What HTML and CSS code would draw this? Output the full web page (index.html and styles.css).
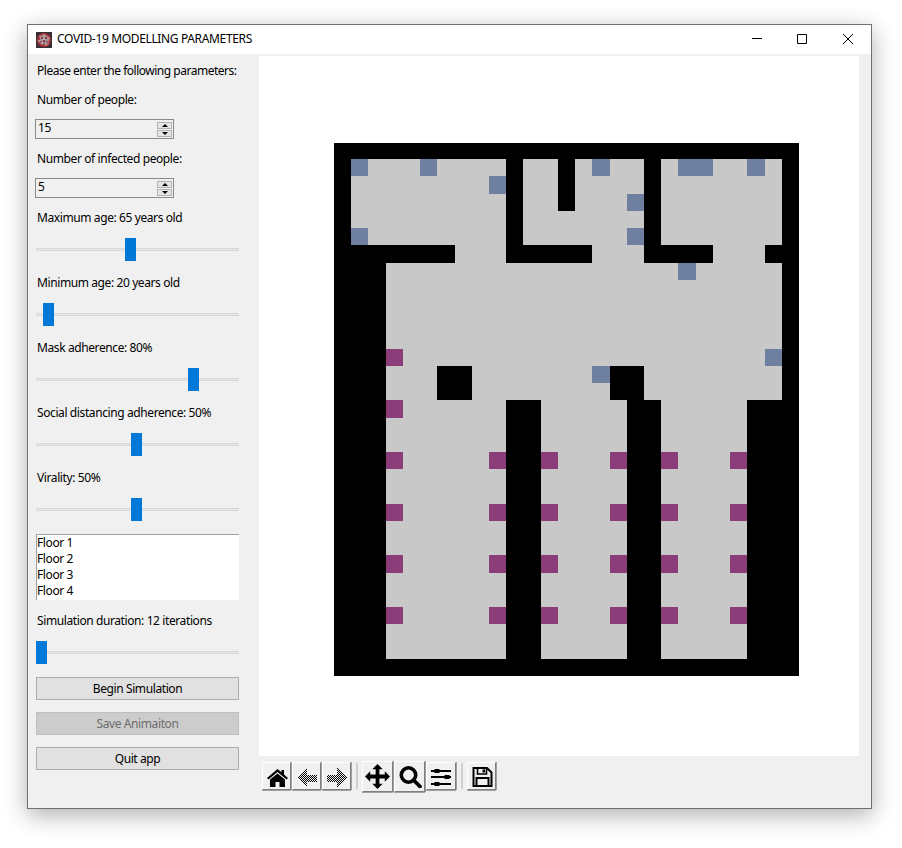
FILE: index.html
```html
<!DOCTYPE html>
<html lang="en">
<head>
<meta charset="utf-8">
<title>COVID-19 MODELLING PARAMETERS</title>
<link rel="stylesheet" href="styles.css">
</head>
<body>
<div class="window">
  <header class="titlebar">
    <svg class="app-icon" width="16" height="16" viewBox="0 0 16 16">
      <rect width="16" height="16" fill="#3a3032"/>
      <circle cx="8" cy="8" r="7" fill="#a8323a"/>
      <circle cx="8" cy="8" r="5" fill="#a89496"/>
      <g fill="#7e1f28"><circle cx="6" cy="6" r="1"/><circle cx="10" cy="6" r="1"/><circle cx="8" cy="9" r="1"/><circle cx="5" cy="10" r=".8"/><circle cx="11" cy="10" r=".8"/><circle cx="8" cy="12" r=".8"/><circle cx="3.500" cy="7" r=".7"/></g>
      <g fill="#eadede"><circle cx="8" cy="3" r=".7"/><circle cx="8" cy="7" r=".7"/><circle cx="3" cy="9" r=".7"/><circle cx="13" cy="6" r=".7"/><circle cx="10" cy="13" r=".7"/><circle cx="4" cy="4" r=".6"/><circle cx="12" cy="12" r=".6"/><circle cx="6" cy="11" r=".6"/></g>
    </svg>
    <span class="title">COVID-19 MODELLING PARAMETERS</span>
    <div class="controls">
      <svg class="ctl" width="10" height="10" viewBox="0 0 10 10"><path d="M0 4.500h10" stroke="#000" fill="none"/></svg>
      <svg class="ctl" width="10" height="10" viewBox="0 0 10 10"><path d="M.5.5h9v9h-9z" stroke="#000" fill="none"/></svg>
      <svg class="ctl ctl-close" width="10" height="10" viewBox="0 0 10 10"><path d="M0 0l10 10M10 0L0 10" stroke="#000" fill="none"/></svg>
    </div>
  </header>
  <div class="client">
    <aside class="sidebar">
      <div class="label l-first">Please enter the following parameters:</div>
      <div class="label l-after-label">Number of people:</div>
      <div class="spin s-first"><span>15</span><div class="spin-btns"><i class="up"></i><i class="down"></i></div></div>
      <div class="label l-after-spin">Number of infected people:</div>
      <div class="spin"><span>5</span><div class="spin-btns"><i class="up"></i><i class="down"></i></div></div>
      <div class="label l-after-spin">Maximum age: 65 years old</div>
      <div class="slider"><div class="thumb" style="margin-left:89px"></div></div>
      <div class="label l-after-slider">Minimum age: 20 years old</div>
      <div class="slider"><div class="thumb" style="margin-left:7px"></div></div>
      <div class="label l-after-slider">Mask adherence: 80%</div>
      <div class="slider"><div class="thumb" style="margin-left:152px"></div></div>
      <div class="label l-after-slider">Social distancing adherence: 50%</div>
      <div class="slider"><div class="thumb" style="margin-left:95px"></div></div>
      <div class="label l-after-slider">Virality: 50%</div>
      <div class="slider"><div class="thumb" style="margin-left:95px"></div></div>
      <ul class="list">
        <li>Floor 1</li>
        <li>Floor 2</li>
        <li>Floor 3</li>
        <li>Floor 4</li>
      </ul>
      <div class="label l-after-list">Simulation duration: 12 iterations</div>
      <div class="slider"><div class="thumb" style="margin-left:0"></div></div>
      <button class="btn">Begin Simulation</button>
      <button class="btn btn-off">Save Animaiton</button>
      <button class="btn">Quit app</button>
    </aside>
    <main class="main">
      <div class="canvas">
        <svg class="map" width="465" height="534" viewBox="0 0 465 534" shape-rendering="crispEdges">
          <rect y="1" width="465" height="533" fill="#000"/>
          <g fill="#c8c8c8">
            <rect x="17" y="17" width="155" height="86"/>
            <rect x="121" y="103" width="51" height="18"/>
            <rect x="189" y="17" width="121" height="86"/>
            <rect x="258" y="103" width="52" height="18"/>
            <rect x="327" y="17" width="121" height="86"/>
            <rect x="379" y="103" width="52" height="18"/>
            <rect x="52" y="121" width="396" height="137"/>
            <rect x="52" y="258" width="120" height="259"/>
            <rect x="207" y="258" width="86" height="259"/>
            <rect x="327" y="258" width="86" height="259"/>
          </g>
          <g fill="#000">
            <rect x="224" y="17" width="17" height="52"/>
            <rect x="103" y="224" width="35" height="34"/>
            <rect x="276" y="224" width="34" height="34"/>
          </g>
          <g fill="#6f7fa0">
            <rect x="17" y="17" width="17" height="17"/>
            <rect x="86" y="17" width="17" height="17"/>
            <rect x="258" y="17" width="18" height="17"/>
            <rect x="344" y="17" width="35" height="17"/>
            <rect x="413" y="17" width="18" height="17"/>
            <rect x="155" y="34" width="17" height="18"/>
            <rect x="293" y="52" width="17" height="17"/>
            <rect x="17" y="86" width="17" height="17"/>
            <rect x="293" y="86" width="17" height="17"/>
            <rect x="344" y="121" width="18" height="17"/>
            <rect x="431" y="207" width="17" height="17"/>
            <rect x="258" y="224" width="18" height="17"/>
          </g>
          <g fill="#8b3d7a">
            <rect x="52" y="207" width="17" height="17"/>
            <rect x="52" y="258" width="17" height="18"/>
            <rect x="52" y="310" width="17" height="17"/><rect x="155" y="310" width="17" height="17"/><rect x="207" y="310" width="17" height="17"/><rect x="276" y="310" width="17" height="17"/><rect x="327" y="310" width="17" height="17"/><rect x="396" y="310" width="17" height="17"/>
            <rect x="52" y="362" width="17" height="17"/><rect x="155" y="362" width="17" height="17"/><rect x="207" y="362" width="17" height="17"/><rect x="276" y="362" width="17" height="17"/><rect x="327" y="362" width="17" height="17"/><rect x="396" y="362" width="17" height="17"/>
            <rect x="52" y="413" width="17" height="18"/><rect x="155" y="413" width="17" height="18"/><rect x="207" y="413" width="17" height="18"/><rect x="276" y="413" width="17" height="18"/><rect x="327" y="413" width="17" height="18"/><rect x="396" y="413" width="17" height="18"/>
            <rect x="52" y="465" width="17" height="17"/><rect x="155" y="465" width="17" height="17"/><rect x="207" y="465" width="17" height="17"/><rect x="276" y="465" width="17" height="17"/><rect x="327" y="465" width="17" height="17"/><rect x="396" y="465" width="17" height="17"/>
          </g>
        </svg>
      </div>
      <div class="toolbar">
        <div class="tool">
          <svg width="24" height="24" viewBox="0 0 24 24"><path d="M12.500 5L2 14l1.500 1.500 9-7.500 9 7.500L23 14l-4-3.500V6h-2.500v2.200z"/><path d="M12.500 9.500L5 15.500V23h5.500v-5h4v5H20v-7.500z"/></svg>
        </div>
        <div class="tool">
          <svg width="24" height="24" viewBox="0 0 24 24"><defs><pattern id="st" width="2" height="2" patternUnits="userSpaceOnUse"><rect width="1" height="1"/><rect x="1" y="1" width="1" height="1"/></pattern></defs><path fill="url(#st)" d="M2 14L12 4v6.500h10v7H12V24z" shape-rendering="crispEdges"/></svg>
        </div>
        <div class="tool">
          <svg width="24" height="24" viewBox="0 0 24 24"><path fill="url(#st)" d="M22 14L12 4v6.500H2v7h10V24z" shape-rendering="crispEdges"/></svg>
        </div>
        <div class="sep"></div>
        <div class="tool tool-up">
          <svg width="25" height="25" viewBox="0 0 24 24"><path d="M12 0l5 5h-3.200v5.200H19V7l5 5-5 5v-3.200h-5.200V19H17l-5 5-5-5h3.200v-5.200H5V17l-5-5 5-5v3.200h5.200V5H7z"/></svg>
        </div>
        <div class="tool tool-up">
          <svg width="24" height="24" viewBox="0 0 24 24"><circle cx="10.500" cy="11" r="7.200" fill="none" stroke="#000" stroke-width="3.600"/><path d="M15.500 16l6.500 6.500" stroke="#000" stroke-width="3.800" stroke-linecap="round"/></svg>
        </div>
        <div class="tool tool-mid">
          <svg width="24" height="24" viewBox="0 0 24 24"><path d="M2 7h20M2 13h20M2 20h20" stroke="#000" stroke-width="1.800" fill="none"/><rect x="5.500" y="5" width="5" height="4"/><rect x="15.500" y="11" width="5" height="4"/><rect x="5.500" y="18" width="5" height="4"/></svg>
        </div>
        <div class="sep"></div>
        <div class="tool">
          <svg width="24" height="24" viewBox="0 0 24 24"><path d="M3.500 4H17l4.500 4.500V22h-18z" fill="none" stroke="#000" stroke-width="2"/><path d="M7.500 4v6h9V4" stroke="#000" stroke-width="1.600" fill="none"/><rect x="12.500" y="5.500" width="2.500" height="3"/><path d="M6.500 22v-8h12v8" fill="none" stroke="#000" stroke-width="2"/></svg>
        </div>
      </div>
    </main>
  </div>
</div>
</body>
</html>
```

FILE: styles.css
```css
* { box-sizing: border-box; }
html, body { margin: 0; height: 100%; background: #fff; overflow: hidden; }
body {
  padding: 24px 0 0 27px;
  font-family: "Noto Sans", "Open Sans", sans-serif;
  font-size: 12px;
  color: #000;
}
.window {
  width: 845px;
  height: 785px;
  border: 1px solid #707070;
  background: #f0f0f0;
  display: flex;
  flex-direction: column;
  box-shadow: 0 6px 22px rgba(0, 0, 0, .32);
}
.titlebar {
  height: 29px;
  flex: none;
  background: #fff;
  display: flex;
  align-items: center;
  padding-left: 8px;
}
.app-icon { flex: none; }
.title { margin-left: 5px; margin-top: -2px; letter-spacing: -.35px; }
.controls { margin-left: auto; display: flex; align-items: center; padding-right: 18px; gap: 35px; margin-top: -1px; }
.ctl { display: block; }
.ctl-close { margin-left: 1px; }
.client { flex: 1; display: flex; min-height: 0; }
.sidebar {
  width: 231px;
  flex: none;
  display: flex;
  flex-direction: column;
  padding-left: 8px;
}
.label { height: 16px; line-height: 16px; padding-left: 1px; white-space: nowrap; letter-spacing: -.4px; }
.l-first { margin-top: 9px; letter-spacing: -.49px; }
.l-after-label { margin-top: 13px; }
.l-after-spin { margin-top: 12px; }
.l-after-slider { margin-top: 14px; }
.l-after-list { margin-top: 13px; }
.spin {
  width: 139px;
  height: 20px;
  margin-top: 11px;
  margin-left: -1px;
  border: 1px solid #8a8a8a;
  background: #f0f0f0;
  display: flex;
  align-items: center;
  justify-content: space-between;
  padding: 0 0 0 2px;
  line-height: 18px;
}
.spin span { margin-top: -2px; letter-spacing: -.3px; }
.spin-btns { width: 16px; display: flex; flex-direction: column; gap: 1px; padding-right: 1px; }
.spin-btns i {
  display: flex;
  align-items: center;
  justify-content: center;
  height: 7px;
  background: #e4e4e4;
  border: 1px solid #b4b4b4;
}
.spin-btns i::before { content: ""; width: 0; height: 0; border-left: 3px solid transparent; border-right: 3px solid transparent; }
.spin-btns .up::before { border-bottom: 3px solid #000; }
.spin-btns .down::before { border-top: 3px solid #000; }
.slider {
  width: 203px;
  height: 23px;
  margin-top: 12px;
  background: linear-gradient(#d8d8d8, #d8d8d8) 0 10px / 100% 1px no-repeat,
              linear-gradient(#e7e7e7, #e7e7e7) 0 11px / 100% 1px no-repeat,
              linear-gradient(#d8d8d8, #d8d8d8) 0 12px / 100% 1px no-repeat;
}
.thumb { width: 11px; height: 23px; background: #0078d7; }
.list {
  list-style: none;
  margin: 13px 0 0;
  padding: 0;
  width: 203px;
  height: 66px;
  background: #fff;
  border-top: 1px solid #a0a0a0;
  border-left: 1px solid #a0a0a0;
}
.list li { height: 16px; line-height: 16px; letter-spacing: -.4px; }
.btn {
  display: block;
  width: 203px;
  height: 23px;
  margin: 12px 0 0;
  padding: 0;
  border: 1px solid #adadad;
  background: #e1e1e1;
  font: inherit;
  letter-spacing: -.4px;
  color: #000;
  line-height: 19px;
}
.slider + .btn { margin-top: 13px; }
.btn-off { background: #cccccc; border-color: #bfbfbf; color: #6d6d6d; }
.main { flex: 1; display: flex; flex-direction: column; min-width: 0; }
.canvas {
  width: 600px;
  height: 700px;
  margin-top: 2px;
  background: #fff;
  padding: 86px 0 0 75px;
  flex: none;
}
.map { display: block; }
.toolbar {
  display: flex;
  align-items: center;
  height: 36px;
  margin-top: 2px;
  padding-left: 3px;
  gap: 1px;
}
.tool {
  width: 29px;
  height: 28px;
  flex: none;
  display: flex;
  align-items: center;
  justify-content: center;
  background: #f0f0f0;
  border: 1px solid;
  border-color: #fff #7f7f7f #7f7f7f #fff;
  box-shadow: 0 1px 0 #a0a0a0, 1px 0 0 #a0a0a0;
}
.tool svg { display: block; }
.tool-up { width: 31px; height: 31px; }
.tool-mid { width: 30px; }
.sep { width: 2px; height: 26px; margin: 0 3px 0 4px; background: #d0d0d0; flex: none; }
```
